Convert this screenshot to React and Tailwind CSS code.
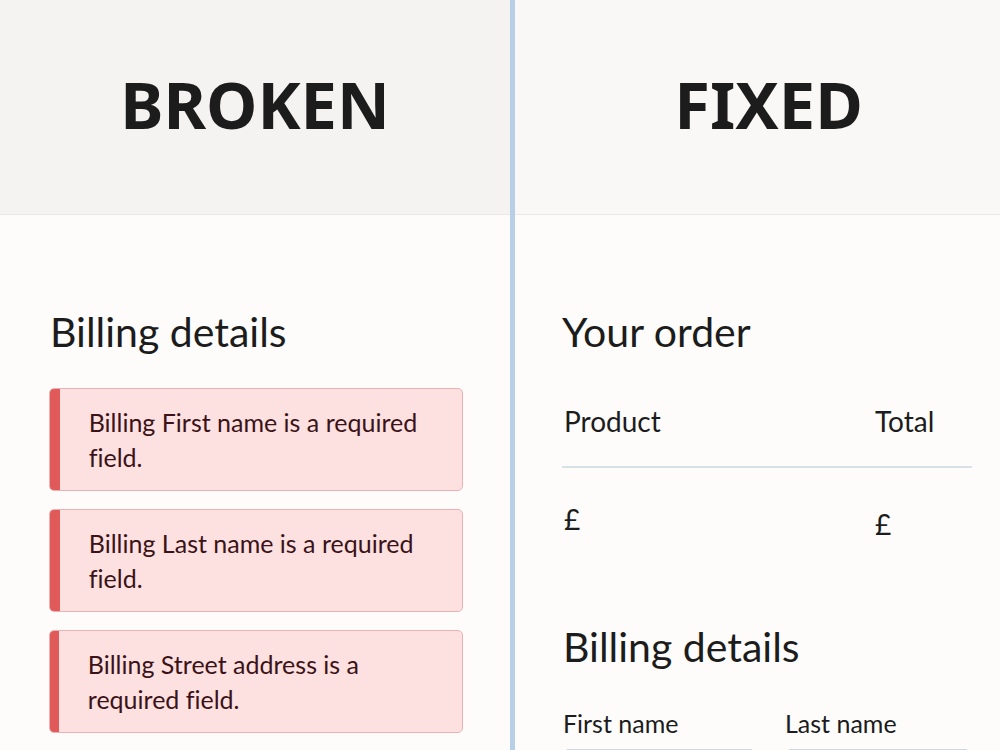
import React from "react";

const errors = [
  "Billing First name is a required field.",
  "Billing Last name is a required field.",
  "Billing Street address is a required field.",
];

function Header({ label, shift }) {
  return (
    <div className={`h-[215px] flex items-center justify-center border-b border-[#ebe8e6] pb-[4px] ${shift}`}>
      <h1 className="text-[65px] font-bold text-[#1c1c1c] font-['Noto_Sans',sans-serif]">
        {label}
      </h1>
    </div>
  );
}

export default function App() {
  return (
    <div className="w-[1000px] h-[750px] overflow-hidden flex bg-[#fdfcfb] font-['Lato',sans-serif] [font-variant-ligatures:none]">
      {/* broken side */}
      <div className="w-[510px] flex flex-col">
        <div className="bg-[#f5f3f2]">
          <Header label="BROKEN" shift="pl-0" />
        </div>
        <div className="pl-[49px] pr-[47px] pt-[93px]">
          <h2 className="text-[41px] text-[#1c1c1c] leading-[48px] ml-[1px]">Billing details</h2>
          <div className="mt-[32px] flex flex-col gap-[18px]">
            {errors.map((e) => (
              <div
                key={e}
                className="h-[103px] flex rounded-[5px] border border-[#eeb1b3] bg-[#fde0e0] overflow-hidden"
              >
                <div className="w-[11px] bg-[#df5a58]" />
                <p className="pl-[29px] pr-[30px] pt-[16px] text-[25px] leading-[35px] text-[#3a1217]">
                  {e}
                </p>
              </div>
            ))}
          </div>
        </div>
      </div>

      {/* divider */}
      <div className="w-[5px] bg-[#b9cfe5]" />

      {/* fixed side */}
      <div className="flex-1 flex flex-col">
        <div className="bg-[#faf8f7]">
          <Header label="FIXED" shift="pl-[22px]" />
        </div>
        <div className="pl-[47px] pr-[28px] pt-[93px] text-[#1c1c1c]">
          <h2 className="text-[41px] leading-[48px]">Your order</h2>
          <div className="mt-[48px] flex pl-[2px] text-[28px] leading-[34px]">
            <span className="w-[311px]">Product</span>
            <span>Total</span>
          </div>
          <div className="mt-[28px] h-[2px] bg-[#d8e2e4]" />
          <div className="mt-[34px] flex items-start pl-[2px] text-[28px] leading-[34px]">
            <span className="w-[311px]">£</span>
            <span className="mt-[5px]">£</span>
          </div>
          <h2 className="mt-[82px] text-[41px] leading-[48px] ml-[1px]">Billing details</h2>
          <div className="mt-[36px] flex text-[25px] leading-[32px]">
            <div className="w-[223px] pl-[1px]">
              <div>First name</div>
              <div className="mt-[10px] ml-[4px] w-[185px] h-[2px] bg-[#cdd9de]" />
            </div>
            <div>
              <div>Last name</div>
              <div className="mt-[10px] ml-[4px] w-[178px] h-[2px] bg-[#cdd9de]" />
            </div>
          </div>
        </div>
      </div>
    </div>
  );
}
